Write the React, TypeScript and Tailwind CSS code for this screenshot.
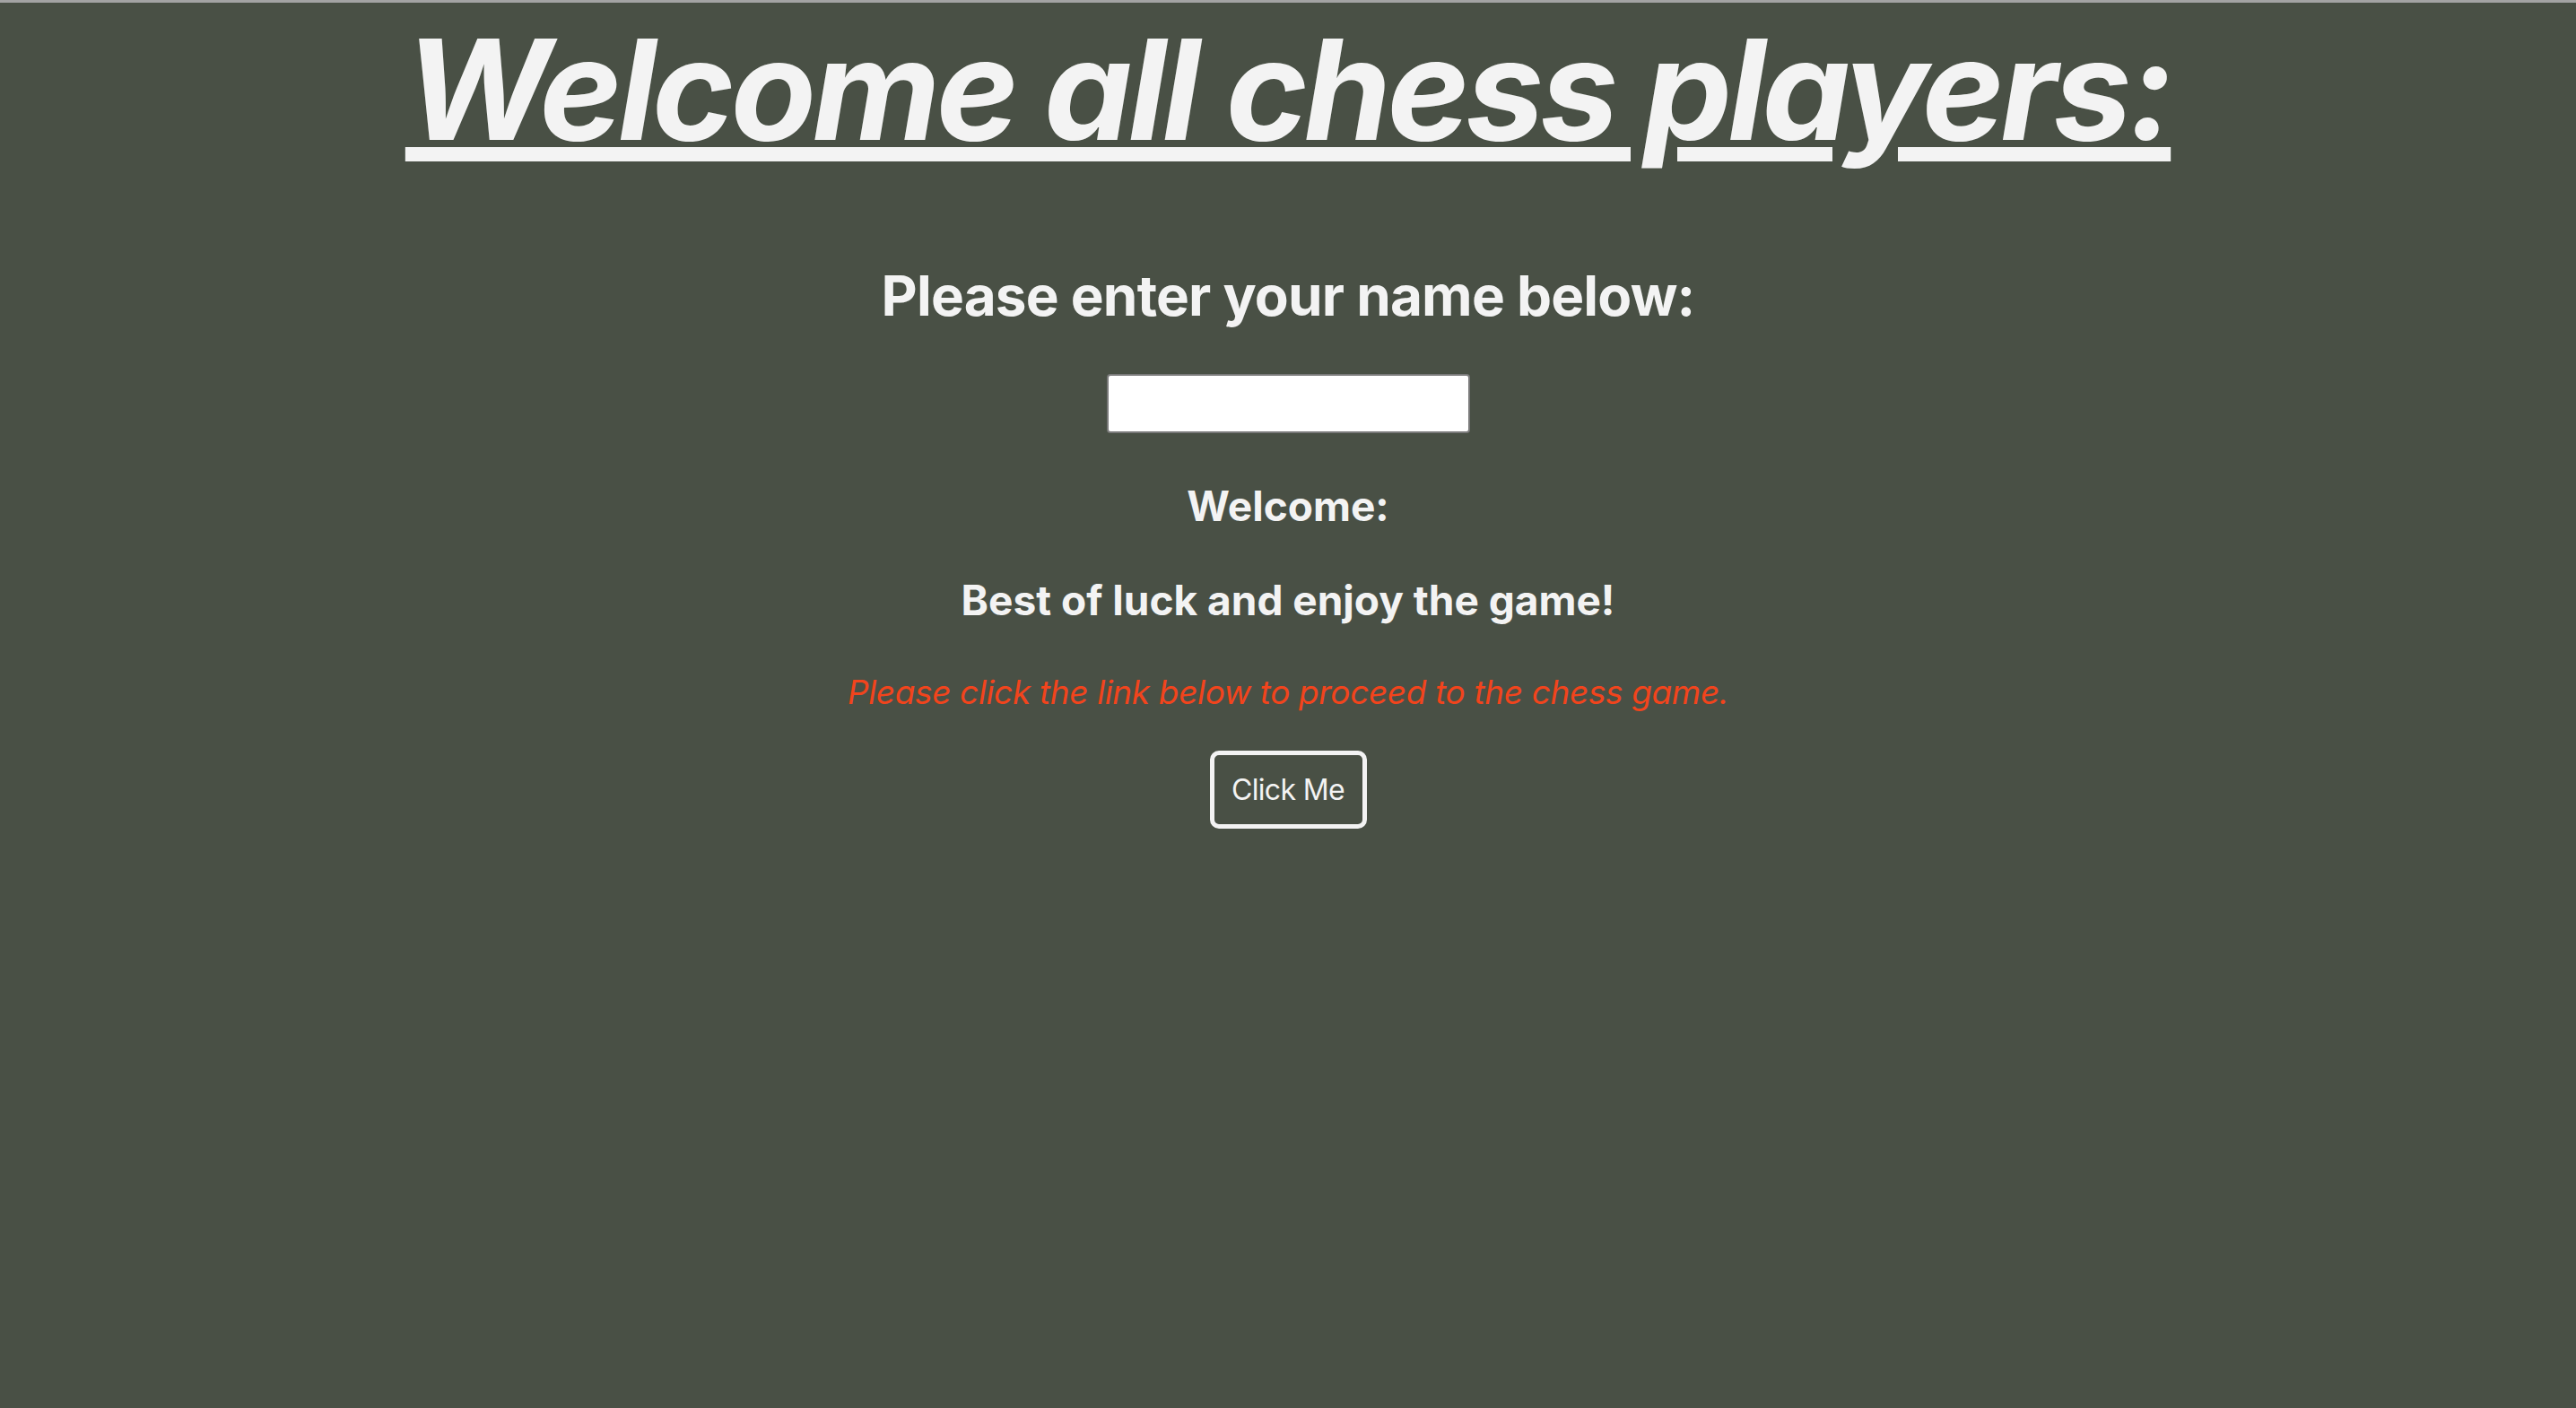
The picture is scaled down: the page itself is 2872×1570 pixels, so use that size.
export default function App() {
  return (
    <div
      className="min-h-[1570px] w-full bg-[#495045] border-t-[3px] border-[#a3a3a3] flex flex-col items-center text-[#f3f3f3]"
      style={{ fontFamily: 'Inter, "Noto Sans", sans-serif' }}
    >
      <h1 className="mt-[19px] text-[156px] leading-[156px] font-bold italic tracking-[-0.028em] underline decoration-[16px] underline-offset-[8px]">
        Welcome all chess players:
      </h1>

      <h2 className="mt-[121px] text-[62px] leading-[62px] font-bold tracking-[-0.013em]">Please enter your name below:</h2>

      <input
        type="text"
        className="mt-[56px] w-[405px] h-[66px] bg-white border-2 border-[#7a7a7a] rounded-[4px] outline-none px-2 text-[28px] text-black"
      />

      <h3 className="mt-[59px] text-[46px] leading-[45px] font-bold">Welcome:</h3>

      <h3 className="mt-[60px] text-[46px] leading-[45px] font-bold">Best of luck and enjoy the game!</h3>

      <p className="mt-[61px] text-[37px] leading-[37px] italic tracking-[-0.01em] text-[#f2441c]">
        Please click the link below to proceed to the chess game.
      </p>

      <button className="mt-[47px] w-[175px] h-[87px] border-[5px] border-[#f3f3f3] rounded-[10px] text-[32px] leading-none tracking-[-0.02em] text-[#f3f3f3] bg-transparent">
        Click Me
      </button>
    </div>
  )
}
